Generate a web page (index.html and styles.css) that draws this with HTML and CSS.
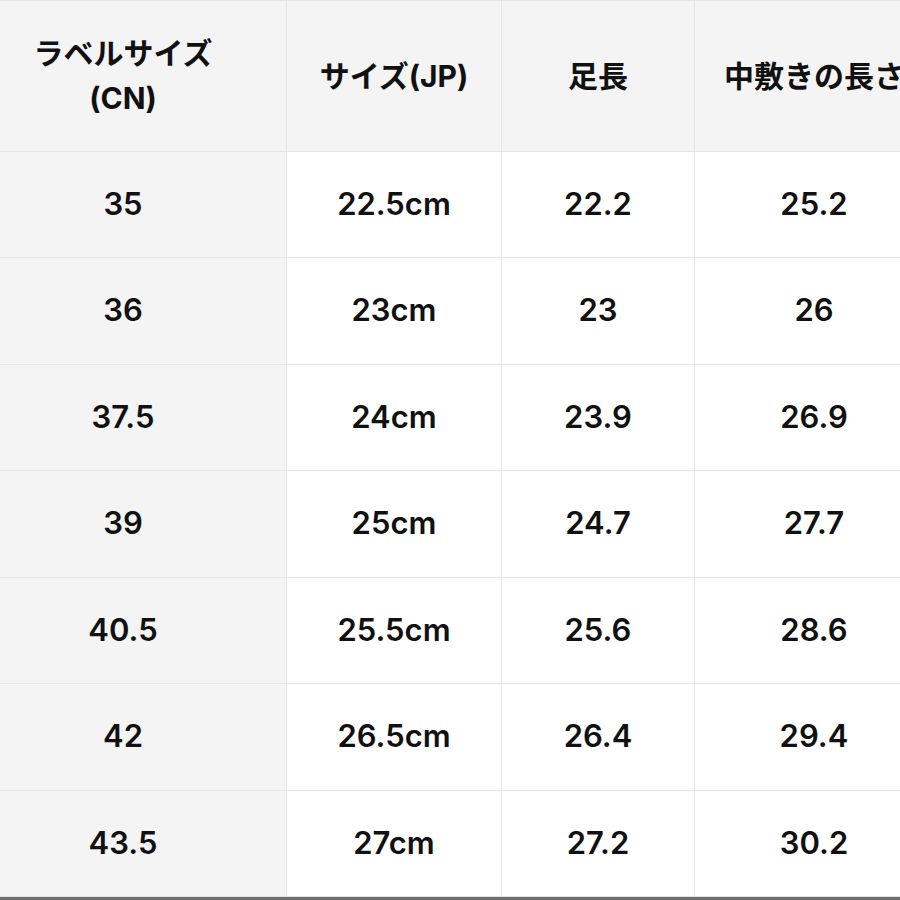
FILE: index.html
```html
<!DOCTYPE html>
<html lang="ja">
<head>
<meta charset="utf-8">
<title>サイズ表</title>
<link rel="stylesheet" href="styles.css">
</head>
<body>
<div class="sheet">
  <div class="grid">
    <div class="cell head side">ラベルサイズ<br>(CN)</div>
    <div class="cell head">サイズ(JP)</div>
    <div class="cell head">足長</div>
    <div class="cell head">中敷きの長さ</div>

    <div class="cell side num">35</div>
    <div class="cell num">22.5cm</div>
    <div class="cell num">22.2</div>
    <div class="cell num">25.2</div>

    <div class="cell side num">36</div>
    <div class="cell num">23cm</div>
    <div class="cell num">23</div>
    <div class="cell num">26</div>

    <div class="cell side num">37.5</div>
    <div class="cell num">24cm</div>
    <div class="cell num">23.9</div>
    <div class="cell num">26.9</div>

    <div class="cell side num">39</div>
    <div class="cell num">25cm</div>
    <div class="cell num">24.7</div>
    <div class="cell num">27.7</div>

    <div class="cell side num">40.5</div>
    <div class="cell num">25.5cm</div>
    <div class="cell num">25.6</div>
    <div class="cell num">28.6</div>

    <div class="cell side num">42</div>
    <div class="cell num">26.5cm</div>
    <div class="cell num">26.4</div>
    <div class="cell num">29.4</div>

    <div class="cell side num">43.5</div>
    <div class="cell num">27cm</div>
    <div class="cell num">27.2</div>
    <div class="cell num">30.2</div>
  </div>
  <div class="edge"></div>
</div>
</body>
</html>
```

FILE: styles.css
```css
html, body {
  margin: 0;
  padding: 0;
  background: #ffffff;
  overflow: hidden;
}

.sheet {
  width: 900px;
  height: 900px;
  overflow: hidden;
  display: flex;
  flex-direction: column;
}

.grid {
  margin-left: -40px;
  width: 973px;
  display: grid;
  grid-template-columns: 326px 214px 192px 238px;
  grid-template-rows: 150px 105px 106px 105px 106px 105px 106px 105px;
  gap: 1px;
  padding: 1px 0;
  background: #e5e5e5;
}

.cell {
  background: #ffffff;
  display: flex;
  align-items: center;
  justify-content: center;
  text-align: center;
  color: #111111;
  font-family: Inter, "Noto Sans CJK JP", "Liberation Sans", sans-serif;
  white-space: nowrap;
}

.head, .side {
  background: #f4f4f4;
}

.head {
  font-size: 30px;
  font-weight: 700;
  line-height: 45px;
}

.num {
  font-size: 31px;
  font-weight: 600;
  padding-bottom: 3px;
}

.edge {
  height: 3px;
  background: #6e6e6e;
}
```
